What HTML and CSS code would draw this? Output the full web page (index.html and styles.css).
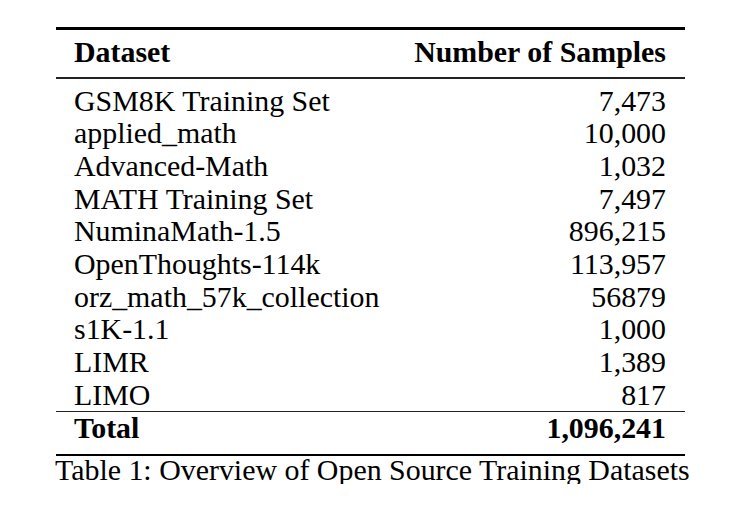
FILE: index.html
```html
<!DOCTYPE html>
<html>
<head>
<meta charset="utf-8">
<link rel="stylesheet" href="styles.css">
</head>
<body>
<div class="wrap">
  <div class="tbl">
    <div class="row head"><span>Dataset</span><span>Number of Samples</span></div>
    <div class="body">
      <div class="row"><span>GSM8K Training Set</span><span>7,473</span></div>
      <div class="row"><span>applied_math</span><span>10,000</span></div>
      <div class="row"><span>Advanced-Math</span><span>1,032</span></div>
      <div class="row"><span>MATH Training Set</span><span>7,497</span></div>
      <div class="row"><span>NuminaMath-1.5</span><span>896,215</span></div>
      <div class="row"><span>OpenThoughts-114k</span><span>113,957</span></div>
      <div class="row"><span>orz_math_57k_collection</span><span>56879</span></div>
      <div class="row"><span>s1K-1.1</span><span>1,000</span></div>
      <div class="row"><span>LIMR</span><span>1,389</span></div>
      <div class="row"><span>LIMO</span><span>817</span></div>
    </div>
    <div class="row total"><span>Total</span><span>1,096,241</span></div>
  </div>
  <div class="caption">Table 1: Overview of Open Source Training Datasets</div>
</div>
</body>
</html>
```

FILE: styles.css
```css
html, body {
  margin: 0;
  padding: 0;
  background: #fff;
}
body {
  font-family: "Liberation Serif", "Times New Roman", serif;
  font-size: 29.9px;
  line-height: 32.67px;
  color: #000;
}
.wrap {
  padding: 27px 0 0 56px;
}
.tbl {
  width: 629px;
  border-top: 3px solid #000;
  border-bottom: 2px solid #000;
}
.row {
  display: flex;
  justify-content: space-between;
  padding: 0 19px 0 18px;
  white-space: nowrap;
}
.head {
  font-weight: bold;
  padding-top: 5.7px;
  padding-bottom: 8.6px;
  border-bottom: 2px solid #222;
}
.body {
  padding-top: 5.7px;
  border-bottom: 1px solid #222;
}
.total {
  font-weight: bold;
  padding-bottom: 8.6px;
}
.caption {
  line-height: 28px;
  white-space: nowrap;
  margin-left: -1px;
}
```
